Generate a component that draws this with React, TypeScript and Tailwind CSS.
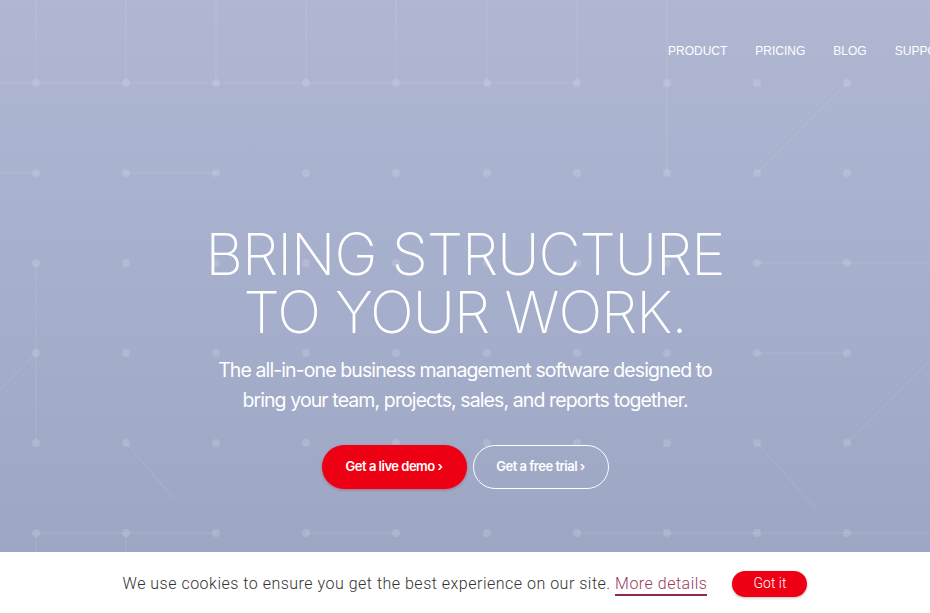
import React from "react";

const cols = [36, 126, 216, 306, 396, 487, 577, 667, 757, 847];
const rows = [83, 173, 263, 353, 443, 533];

// faint connector lines of the background network
const lines: [number, number, number, number][] = [
  [0, 83, 577, 83],
  [36, 0, 36, 83],
  [126, 0, 126, 83],
  [216, 0, 216, 83],
  [306, 0, 306, 83],
  [396, 0, 396, 83],
  [487, 0, 487, 83],
  [577, 0, 577, 83],
  [667, 0, 667, 173],
  [847, 83, 757, 173],
  [0, 173, 36, 173],
  [126, 173, 216, 173],
  [757, 263, 930, 263],
  [36, 263, 36, 443],
  [36, 353, 0, 390],
  [757, 353, 847, 353],
  [930, 360, 847, 443],
  [126, 443, 175, 500],
  [757, 443, 817, 510],
  [36, 533, 216, 533],
  [306, 533, 396, 533],
  [577, 533, 930, 533],
  [36, 533, 36, 560],
  [126, 533, 126, 560],
];

function Network() {
  return (
    <svg
      className="pointer-events-none absolute inset-0 h-full w-full"
      width="930"
      height="613"
      aria-hidden
    >
      {lines.map(([x1, y1, x2, y2], i) => (
        <line key={i} x1={x1} y1={y1} x2={x2} y2={y2} stroke="white" strokeOpacity="0.12" strokeWidth="1" />
      ))}
      {rows.map((y) =>
        cols.map((x) => <circle key={`${x}-${y}`} cx={x} cy={y} r="4" fill="white" fillOpacity="0.15" />)
      )}
    </svg>
  );
}

export default function App() {
  return (
    <div className="relative h-[613px] w-full overflow-hidden bg-gradient-to-b from-[#afb7d3] to-[#9ba5c2] font-['Inter',sans-serif]">
      <Network />

      <header className="relative flex whitespace-nowrap pl-[668px] pt-[44px]">
        <nav className="flex gap-[28px] font-['Liberation_Sans',sans-serif] text-[12px] leading-[14px] text-white">
          <a href="#">PRODUCT</a>
          <a href="#">PRICING</a>
          <a href="#">BLOG</a>
          <a href="#">SUPPORT</a>
        </nav>
      </header>

      <main className="relative flex flex-col items-center pt-[167px] text-center text-white">
        <h1 className="text-[58px] font-extralight leading-[58px] tracking-[-1px]">
          BRING STRUCTURE
          <br />
          TO YOUR WORK.
        </h1>
        <p className="mt-[14px] text-[19.5px] leading-[30px] tracking-[-0.9px]">
          The all-in-one business management software designed to
          <br />
          bring your team, projects, sales, and reports together.
        </p>
        <div className="mt-[30px] flex gap-[6px] text-[13px] font-semibold tracking-[-0.5px]">
          <a
            href="#"
            className="flex h-[44px] w-[145px] items-center justify-center rounded-full bg-[#ee0014] shadow-[0_1px_3px_rgba(180,0,20,0.35)]"
          >
            Get a live demo ›
          </a>
          <a
            href="#"
            className="flex h-[44px] w-[136px] items-center justify-center rounded-full border border-white"
          >
            Get a free trial ›
          </a>
        </div>
      </main>

      <div className="fixed inset-x-0 bottom-0 flex h-[61px] items-center justify-center gap-[25px] bg-white pt-[2px] font-['Roboto',sans-serif] text-[16px] font-light tracking-[0.5px] text-[#333]">
        <p>
          We use cookies to ensure you get the best experience on our site.{" "}
          <a href="#" className="border-b-2 border-[#8e2c4b] pb-[1px] text-[#9b3a5a]">
            More details
          </a>
        </p>
        <button className="h-[26px] w-[75px] rounded-full bg-[#ee0014] text-[14px] tracking-normal text-white shadow-[0_1px_3px_rgba(0,0,0,0.25)]">
          Got it
        </button>
      </div>
    </div>
  );
}
